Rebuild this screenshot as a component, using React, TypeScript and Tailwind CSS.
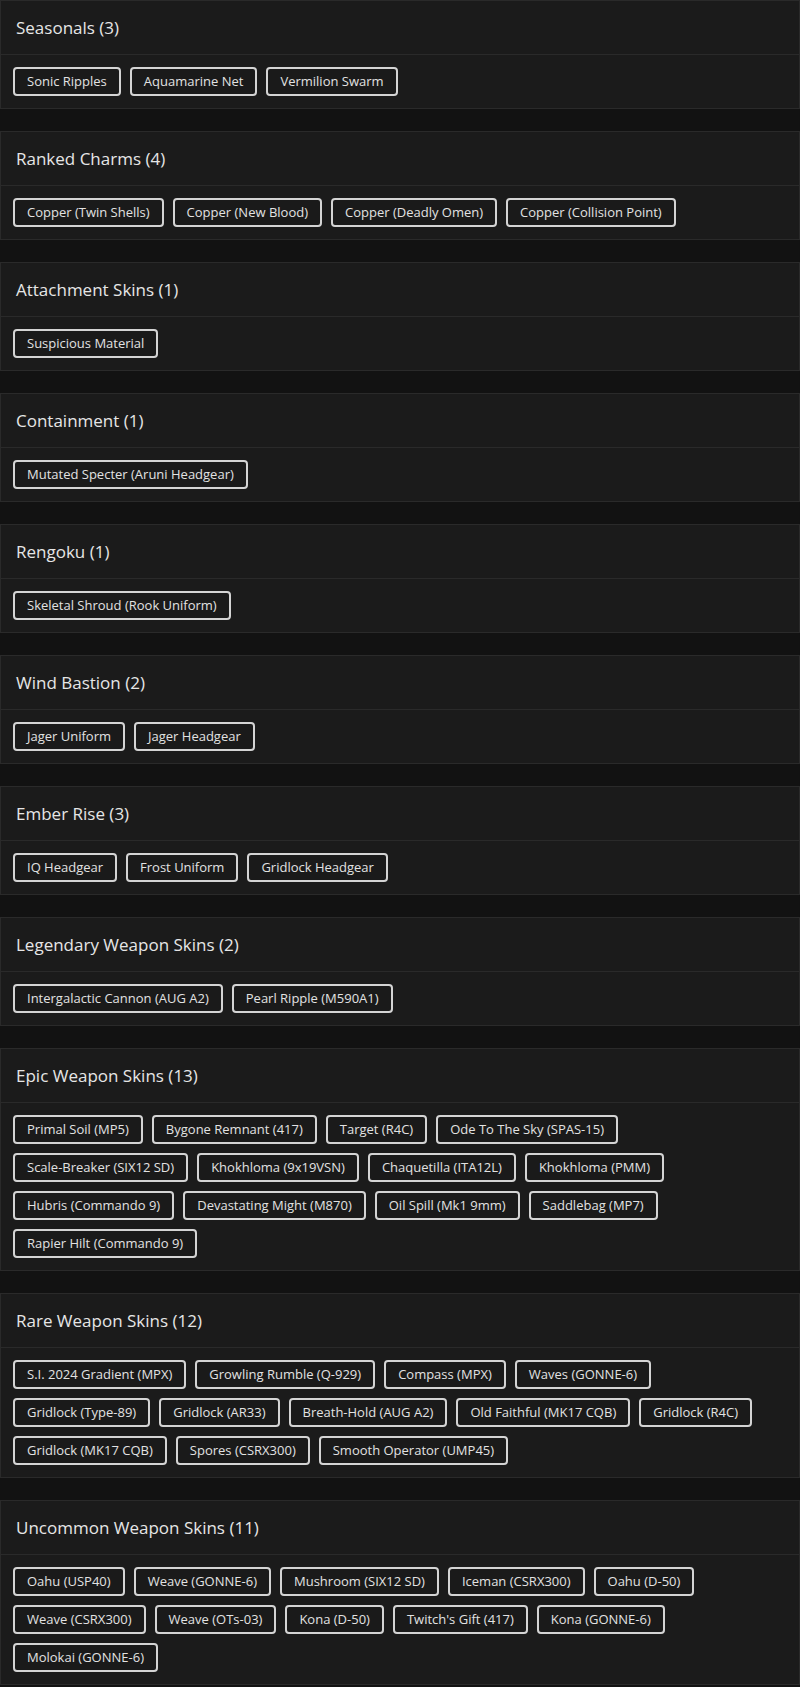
import React from "react";

type Group = { title: string; items: string[] };

const groups: Group[] = [
  { title: "Seasonals", items: ["Sonic Ripples", "Aquamarine Net", "Vermilion Swarm"] },
  {
    title: "Ranked Charms",
    items: ["Copper (Twin Shells)", "Copper (New Blood)", "Copper (Deadly Omen)", "Copper (Collision Point)"],
  },
  { title: "Attachment Skins", items: ["Suspicious Material"] },
  { title: "Containment", items: ["Mutated Specter (Aruni Headgear)"] },
  { title: "Rengoku", items: ["Skeletal Shroud (Rook Uniform)"] },
  { title: "Wind Bastion", items: ["Jager Uniform", "Jager Headgear"] },
  { title: "Ember Rise", items: ["IQ Headgear", "Frost Uniform", "Gridlock Headgear"] },
  { title: "Legendary Weapon Skins", items: ["Intergalactic Cannon (AUG A2)", "Pearl Ripple (M590A1)"] },
  {
    title: "Epic Weapon Skins",
    items: [
      "Primal Soil (MP5)",
      "Bygone Remnant (417)",
      "Target (R4C)",
      "Ode To The Sky (SPAS-15)",
      "Scale-Breaker (SIX12 SD)",
      "Khokhloma (9x19VSN)",
      "Chaquetilla (ITA12L)",
      "Khokhloma (PMM)",
      "Hubris (Commando 9)",
      "Devastating Might (M870)",
      "Oil Spill (Mk1 9mm)",
      "Saddlebag (MP7)",
      "Rapier Hilt (Commando 9)",
    ],
  },
  {
    title: "Rare Weapon Skins",
    items: [
      "S.I. 2024 Gradient (MPX)",
      "Growling Rumble (Q-929)",
      "Compass (MPX)",
      "Waves (GONNE-6)",
      "Gridlock (Type-89)",
      "Gridlock (AR33)",
      "Breath-Hold (AUG A2)",
      "Old Faithful (MK17 CQB)",
      "Gridlock (R4C)",
      "Gridlock (MK17 CQB)",
      "Spores (CSRX300)",
      "Smooth Operator (UMP45)",
    ],
  },
  {
    title: "Uncommon Weapon Skins",
    items: [
      "Oahu (USP40)",
      "Weave (GONNE-6)",
      "Mushroom (SIX12 SD)",
      "Iceman (CSRX300)",
      "Oahu (D-50)",
      "Weave (CSRX300)",
      "Weave (OTs-03)",
      "Kona (D-50)",
      "Twitch's Gift (417)",
      "Kona (GONNE-6)",
      "Molokai (GONNE-6)",
    ],
  },
];

function SkinCard({ group }: { group: Group }) {
  return (
    <div className="border border-[#2a2a2a] bg-[#1b1b1b]">
      <div className="h-[54px] flex items-center px-[15px] border-b border-[#2a2a2a]">
        <h2 className="text-[17px] font-medium text-[#e6e6e6]">
          {group.title} ({group.items.length})
        </h2>
      </div>
      <div className="flex flex-wrap gap-[9px] px-[12px] py-[12px]">
        {group.items.map((item) => (
          <span
            key={item}
            className="h-[29px] flex items-center px-[12px] border-2 border-[#d4d4d4] rounded-[4px] bg-[#1a1a1a] text-[13px] text-[#e2e2e2] whitespace-nowrap"
          >
            {item}
          </span>
        ))}
      </div>
    </div>
  );
}

export default function App() {
  return (
    <div className="min-h-screen bg-[#121212] font-['Open_Sans',sans-serif]">
      <div className="flex flex-col gap-[22px]">
        {groups.map((g) => (
          <SkinCard key={g.title} group={g} />
        ))}
      </div>
    </div>
  );
}
